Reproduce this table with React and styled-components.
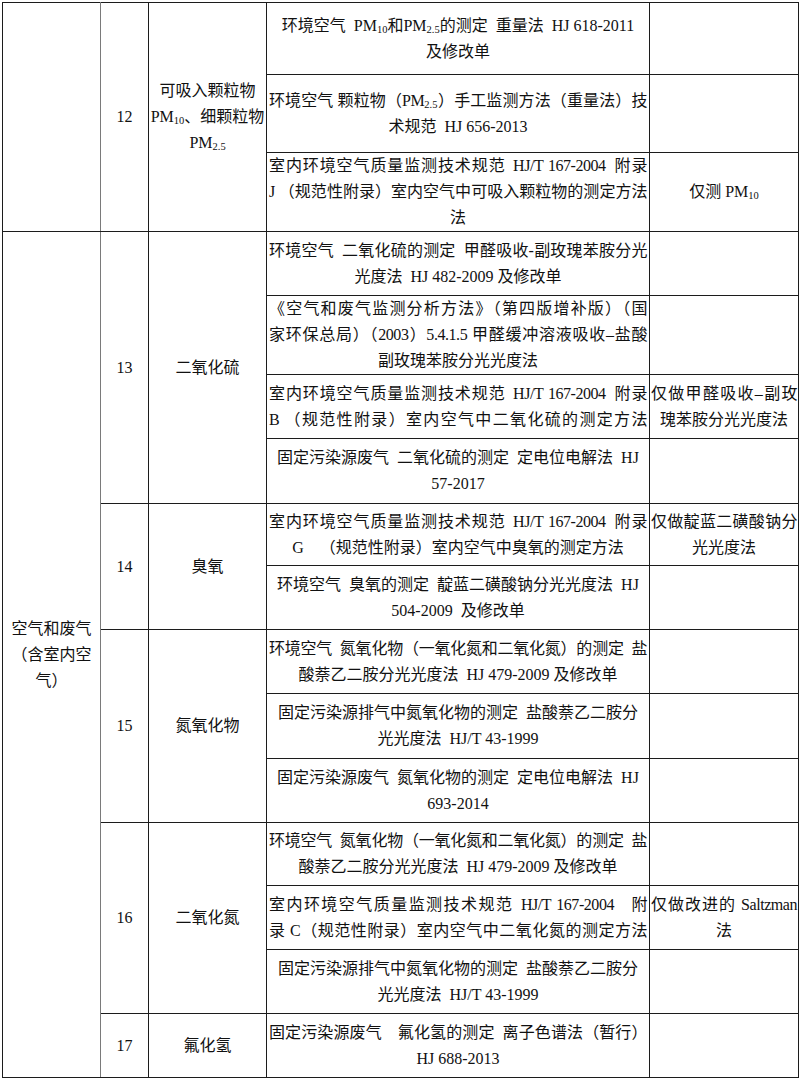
import React from "react";
import styled, { createGlobalStyle } from "styled-components";

const Global = createGlobalStyle`
  html, body { margin: 0; padding: 0; background: #fff; }
  body {
    font-family: "Liberation Serif", "Noto Sans CJK SC", serif;
    color: #111;
  }
`;

const Sheet = styled.table`
  border-collapse: collapse;
  table-layout: fixed;
  width: 796px;
  margin: 2px 0 0 2px;
  font-size: 16px;
  line-height: 26px;
`;

const Row = styled.tr`
  height: ${(p) => p.$h}px;
`;

const Cell = styled.td`
  border: 1px solid #1c1c1c;
  border-right-color: ${(p) => (p.$soft ? "#7a7a7a" : "#1c1c1c")};
  padding: 0 ${(p) => (p.$pad ?? 2)}px;
  text-align: center;
  vertical-align: middle;
  overflow: visible;
`;

const Line = styled.span`
  display: block;
  text-align: ${(p) => (p.$full ? "justify" : "center")};
  text-align-last: ${(p) => (p.$full ? "justify" : "center")};
  letter-spacing: ${(p) => (p.$full ? "-0.45px" : "0")};
  white-space: ${(p) => (p.$full ? "normal" : "nowrap")};
`;

const Sub = styled.sub`
  font-size: 10.5px;
  line-height: 0;
  vertical-align: -2px;
  letter-spacing: 0;
`;

const E = "\u2002";
const M = "\u2003";

const PM10 = () => (
  <>
    PM<Sub>10</Sub>
  </>
);
const PM25 = () => (
  <>
    PM<Sub>2.5</Sub>
  </>
);

const Lines = ({ items }) =>
  items.map((it, i) => (
    <Line key={i} $full={it.full}>
      {it.t}
    </Line>
  ));

const L = (t, full = false) => ({ t, full });

const noxAmbient = [
  L(`环境空气${E}氮氧化物（一氧化氮和二氧化氮）的测定${E}盐`, true),
  L(`酸萘乙二胺分光光度法${E}HJ 479-2009 及修改单`),
];
const noxExhaust = [
  L(`固定污染源排气中氮氧化物的测定${E}盐酸萘乙二胺分`),
  L(`光光度法${E}HJ/T 43-1999`),
];

export default function App() {
  return (
    <>
      <Global />
      <Sheet>
        <colgroup>
          <col style={{ width: 98 }} />
          <col style={{ width: 48 }} />
          <col style={{ width: 118 }} />
          <col style={{ width: 383 }} />
          <col style={{ width: 149 }} />
        </colgroup>
        <tbody>
          <Row $h={72}>
            <Cell rowSpan={3} $soft />
            <Cell rowSpan={3}>12</Cell>
            <Cell rowSpan={3} $pad={0}>
              <Lines
                items={[
                  L("可吸入颗粒物"),
                  L(
                    <>
                      <PM10 />、细颗粒物
                    </>
                  ),
                  L(<PM25 />),
                ]}
              />
            </Cell>
            <Cell>
              <Lines
                items={[
                  L(
                    <>
                      环境空气{E}
                      <PM10 />和<PM25 />的测定{E}重量法{E}HJ 618-2011
                    </>
                  ),
                  L("及修改单"),
                ]}
              />
            </Cell>
            <Cell />
          </Row>
          <Row $h={78}>
            <Cell>
              <Lines
                items={[
                  L(
                    <>
                      环境空气 颗粒物（<PM25 />）手工监测方法（重量法）技
                    </>,
                    true
                  ),
                  L(`术规范${E}HJ 656-2013`),
                ]}
              />
            </Cell>
            <Cell />
          </Row>
          <Row $h={79}>
            <Cell>
              <Lines
                items={[
                  L(`室内环境空气质量监测技术规范${E}HJ/T 167-2004${E}附录`, true),
                  L("J （规范性附录）室内空气中可吸入颗粒物的测定方法", true),
                  L("法"),
                ]}
              />
            </Cell>
            <Cell $pad={1}>
              <Lines
                items={[
                  L(
                    <>
                      仅测 <PM10 />
                    </>
                  ),
                ]}
              />
            </Cell>
          </Row>

          <Row $h={64}>
            <Cell rowSpan={13} $soft $pad={5}>
              <Lines items={[L("空气和废气"), L("（含室内空"), L("气）")]} />
            </Cell>
            <Cell rowSpan={4}>13</Cell>
            <Cell rowSpan={4}>二氧化硫</Cell>
            <Cell>
              <Lines
                items={[
                  L(`环境空气${E}二氧化硫的测定${E}甲醛吸收-副玫瑰苯胺分光`, true),
                  L(`光度法${E}HJ 482-2009 及修改单`),
                ]}
              />
            </Cell>
            <Cell />
          </Row>
          <Row $h={78}>
            <Cell>
              <Lines
                items={[
                  L("《空气和废气监测分析方法》（第四版增补版）（国", true),
                  L("家环保总局）（2003）5.4.1.5 甲醛缓冲溶液吸收–盐酸", true),
                  L("副玫瑰苯胺分光光度法"),
                ]}
              />
            </Cell>
            <Cell />
          </Row>
          <Row $h={64}>
            <Cell>
              <Lines
                items={[
                  L(`室内环境空气质量监测技术规范${E}HJ/T 167-2004${E}附录`, true),
                  L(` B （规范性附录）室内空气中二氧化硫的测定方法`, true),
                ]}
              />
            </Cell>
            <Cell $pad={1}>
              <Lines items={[L("仅做甲醛吸收–副玫", true), L("瑰苯胺分光光度法")]} />
            </Cell>
          </Row>
          <Row $h={65}>
            <Cell>
              <Lines
                items={[
                  L(`固定污染源废气${E}二氧化硫的测定${E}定电位电解法${E}HJ`),
                  L("57-2017"),
                ]}
              />
            </Cell>
            <Cell />
          </Row>

          <Row $h={62}>
            <Cell rowSpan={2}>14</Cell>
            <Cell rowSpan={2}>臭氧</Cell>
            <Cell>
              <Lines
                items={[
                  L(`室内环境空气质量监测技术规范${E}HJ/T 167-2004${E}附录`, true),
                  L(`G${M}（规范性附录）室内空气中臭氧的测定方法`),
                ]}
              />
            </Cell>
            <Cell $pad={1}>
              <Lines items={[L("仅做靛蓝二磺酸钠分", true), L("光光度法")]} />
            </Cell>
          </Row>
          <Row $h={64}>
            <Cell>
              <Lines
                items={[
                  L(`环境空气${E}臭氧的测定${E}靛蓝二磺酸钠分光光度法${E}HJ`),
                  L(`504-2009${E}及修改单`),
                ]}
              />
            </Cell>
            <Cell />
          </Row>

          <Row $h={64}>
            <Cell rowSpan={3}>15</Cell>
            <Cell rowSpan={3}>氮氧化物</Cell>
            <Cell>
              <Lines items={noxAmbient} />
            </Cell>
            <Cell />
          </Row>
          <Row $h={65}>
            <Cell>
              <Lines items={noxExhaust} />
            </Cell>
            <Cell />
          </Row>
          <Row $h={64}>
            <Cell>
              <Lines
                items={[
                  L(`固定污染源废气${E}氮氧化物的测定${E}定电位电解法${E}HJ`),
                  L("693-2014"),
                ]}
              />
            </Cell>
            <Cell />
          </Row>

          <Row $h={63}>
            <Cell rowSpan={3}>16</Cell>
            <Cell rowSpan={3}>二氧化氮</Cell>
            <Cell>
              <Lines items={noxAmbient} />
            </Cell>
            <Cell />
          </Row>
          <Row $h={64}>
            <Cell>
              <Lines
                items={[
                  L(` 室内环境空气质量监测技术规范${E}HJ/T 167-2004${M}附`, true),
                  L("录 C（规范性附录）室内空气中二氧化氮的测定方法", true),
                ]}
              />
            </Cell>
            <Cell $pad={1}>
              <Lines items={[L("仅做改进的 Saltzman", true), L("法")]} />
            </Cell>
          </Row>
          <Row $h={64}>
            <Cell>
              <Lines items={noxExhaust} />
            </Cell>
            <Cell />
          </Row>

          <Row $h={64}>
            <Cell>17</Cell>
            <Cell>氟化氢</Cell>
            <Cell>
              <Lines
                items={[
                  L(`固定污染源废气${M}氟化氢的测定${E}离子色谱法（暂行）`, true),
                  L("HJ 688-2013"),
                ]}
              />
            </Cell>
            <Cell />
          </Row>
        </tbody>
      </Sheet>
    </>
  );
}
